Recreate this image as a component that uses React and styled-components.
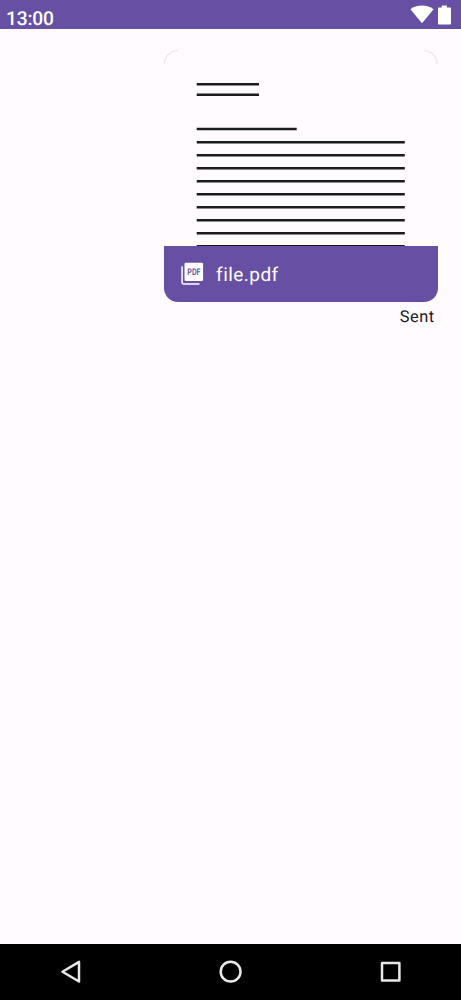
import React from "react";
import styled, { createGlobalStyle } from "styled-components";

const GlobalStyle = createGlobalStyle`
  body {
    margin: 0;
    background: #fffbff;
    font-family: Roboto, "Liberation Sans", sans-serif;
    text-rendering: geometricPrecision;
  }
`;

const Screen = styled.div`
  display: flex;
  flex-direction: column;
  height: 100vh;
  background: #fffbff;
  overflow: hidden;
`;

const StatusBar = styled.header`
  display: flex;
  justify-content: space-between;
  box-sizing: border-box;
  height: 29px;
  flex: none;
  padding: 0 10px 0 6px;
  background: #6750a4;
  color: #fff;
`;

const Clock = styled.span`
  padding-top: 7px;
  font-size: 19.2px;
  line-height: 23px;
  font-weight: 500;
  letter-spacing: -0.2px;
`;

const StatusIcons = styled.div`
  display: flex;
  gap: 4px;
  padding-top: 5px;
`;

const Conversation = styled.main`
  flex: 1;
  display: flex;
  flex-direction: column;
  align-items: flex-end;
  padding: 21.3px 23.5px 0 0;
`;

const FileCard = styled.article`
  width: 273.7px;
  height: 251.6px;
  display: flex;
  flex-direction: column;
  border-radius: 14px;
  overflow: hidden;
`;

const Preview = styled.svg`
  display: block;
  width: 100%;
  flex: 1;
  min-height: 0;
`;

const FileFooter = styled.footer`
  display: flex;
  align-items: center;
  height: 56.4px;
  box-sizing: border-box;
  flex: none;
  padding: 0 17px;
  gap: 12.3px;
  background: #6750a4;
  color: #fff;
`;

const PdfGlyph = styled.svg`
  width: 23px;
  height: 23px;
  flex: none;
`;

const FileName = styled.span`
  font-size: 19px;
  line-height: 26px;
  letter-spacing: 0.45px;
  padding-top: 3.4px;
`;

const Status = styled.span`
  margin: 5.6px 3px 0 0;
  font-size: 16.4px;
  line-height: 22px;
  letter-spacing: 0.45px;
  color: #1c1b1f;
`;

const NavBar = styled.nav`
  display: flex;
  justify-content: center;
  gap: 132px;
  align-items: center;
  height: 56.5px;
  flex: none;
  background: #000;
`;

const NavIcon = styled.svg`
  width: 28px;
  height: 28px;
  flex: none;
  fill: none;
  stroke: #e8e8e8;
  stroke-width: 2.5;
  stroke-linejoin: round;
`;

const headingLines = [
  { y: 34.3, end: 95 },
  { y: 44.8, end: 95 },
  { y: 79, end: 132.7 },
];
const bodyLines = Array.from({ length: 9 }, (_, i) => ({ y: 92.3 + i * 13, end: 240.8 }));

function DocumentPreview() {
  return (
    <Preview viewBox="0 0 273.7 195.2" preserveAspectRatio="xMinYMin slice">
      <path d="M-.2 14V195.200" stroke="#f0eaf0" strokeWidth=".8" />
      <path d="M.5 14A13.500 13.500 0 0 1 14 .5M259.700 .5A13.500 13.500 0 0 1 273.200 14" fill="none" stroke="#e8e2e7" strokeWidth="1" />
      {[...headingLines, ...bodyLines].map(({ y, end }) => (
        <path key={y} d={`M32.7 ${y}H${end}`} stroke="#1c1b1f" strokeWidth="2.5" />
      ))}
    </Preview>
  );
}

function PdfIcon() {
  return (
    <PdfGlyph viewBox="0 0 23 23">
      <path d="M1.100 4.200V20Q1.100 22 2.900 22H18.500" fill="none" stroke="#fff" strokeWidth="1.500" />
      <rect x="3.500" y=".7" width="18.600" height="18.400" rx="1.400" fill="#fff" />
      <text
        x="6.300"
        y="13.200"
        fontSize="9.200"
        fontWeight="600"
        fill="#6750a4"
        textLength="13.200"
        lengthAdjust="spacingAndGlyphs"
      >
        PDF
      </text>
    </PdfGlyph>
  );
}

export default function App() {
  return (
    <Screen>
      <GlobalStyle />
      <StatusBar>
        <Clock>13:00</Clock>
        <StatusIcons>
          <svg width="24" height="20" viewBox="0 0 24 20" fill="#fff">
            <path d="M12 18.300L.4 4.200C3.600 1.700 7.600.5 12 .5s8.400 1.200 11.600 3.700z" />
          </svg>
          <svg width="13" height="20" viewBox="0 0 13 20" fill="#fff">
            <path d="M1 2.400h2.800V.5h5v1.900h3.200q1 0 1 1v15.200q0 1-1 1H1q-1 0-1-1V3.400q0-1 1-1z" />
          </svg>
        </StatusIcons>
      </StatusBar>
      <Conversation>
        <FileCard>
          <DocumentPreview />
          <FileFooter>
            <PdfIcon />
            <FileName>file.pdf</FileName>
          </FileFooter>
        </FileCard>
        <Status>Sent</Status>
      </Conversation>
      <NavBar>
        <NavIcon viewBox="0.5 0.3 28 28">
          <path d="M22.500 4.200V23.800L6 14z" />
        </NavIcon>
        <NavIcon viewBox="0.4 0.3 28 28">
          <circle cx="14" cy="14" r="9.900" />
        </NavIcon>
        <NavIcon viewBox="0.5 0 28 28">
          <rect x="5.500" y="5" width="17.400" height="17.400" />
        </NavIcon>
      </NavBar>
    </Screen>
  );
}
